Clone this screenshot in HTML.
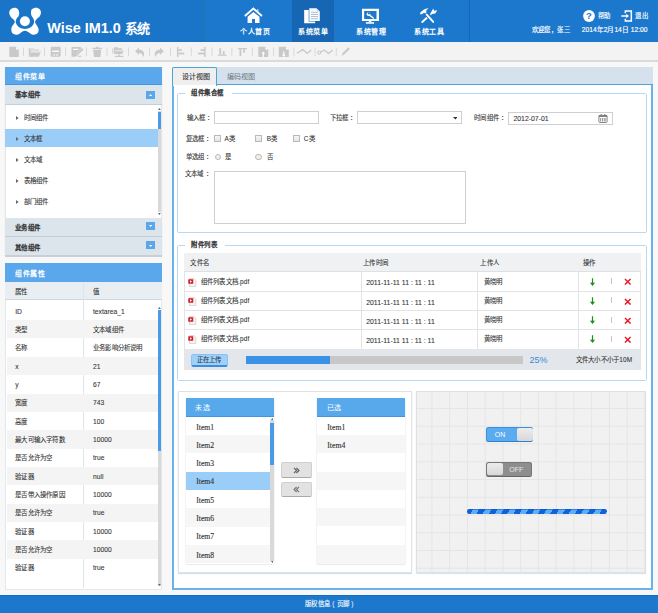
<!DOCTYPE html>
<html lang="zh-CN">
<head>
<meta charset="utf-8">
<style>
*{margin:0;padding:0;box-sizing:border-box;}
html,body{width:658px;height:613px;overflow:hidden;}
body{position:relative;background:#f8f8f9;font-family:"Liberation Sans",sans-serif;color:#333;}
.a{position:absolute;}
.t{position:absolute;white-space:nowrap;line-height:1;}
#hdr{left:0;top:0;width:658px;height:42px;background:#1a74c8;}
#tb{left:0;top:42px;width:658px;background:#f3f3f3;border-bottom:2px solid #dadada;height:19.7px;}
#ftr{left:0;top:595px;width:658px;height:18px;background:#1c78cc;border-top:1px solid #176bc2;}
.nav{top:0;width:42px;height:42px;}
.navt{top:27.6px;left:0;width:42px;text-align:center;color:#fff;font-size:7px;font-weight:bold;letter-spacing:0.5px;text-indent:0.5px;}
.sep{top:47px;width:1px;height:9px;background:#d0d0d0;}
.pan{background:#fff;}
.ph{background:#5aa8eb;height:18px;}
.pht{color:#fff;font-size:7px;font-weight:bold;letter-spacing:0.5px;}
.sub{background:#dbe5eb;border-bottom:1px solid #c5ced4;}
.subt{font-size:6.45px;color:#333;letter-spacing:0.4px;-webkit-text-stroke:0.32px #333;}
.btn8{width:8.5px;height:8px;background:#5aa8eb;}
.it{font-size:6.45px;color:#333;letter-spacing:0.2px;-webkit-text-stroke:0.08px #333;}
.lt{font-size:6.7px;letter-spacing:0;}
.tri{width:0;height:0;border-left:2.5px solid #666;border-top:2px solid transparent;border-bottom:2px solid transparent;}
.lbl{font-size:6.45px;color:#333;letter-spacing:0.2px;-webkit-text-stroke:0.08px #333;}
.inp{background:#fff;border:1px solid #cfcfcf;}
.chk{width:7px;height:7px;border:1px solid #b9b9b9;background:linear-gradient(#f6f6f6,#e4e4e4);}
.rad{width:6.5px;height:6.5px;border:1px solid #b9b9b9;border-radius:50%;background:#f0f0f0;}
.fs{border:1px solid #b9d9f3;border-radius:1.5px;}
.leg{font-size:6.45px;color:#333;background:#fff;padding:0 6px;letter-spacing:0.5px;-webkit-text-stroke:0.32px #333;}
.row{background:#fff;border-bottom:1px solid #e3e3e3;}
.srow{background:#fff;}
.srow.g{background:#f6f6f6;}
.itm{font-family:"Liberation Serif",serif;font-size:7.7px;color:#333;margin-top:0.5px;-webkit-text-stroke:0.12px #333;}
</style>
</head>
<body>
<!-- header -->
<div id="hdr" class="a"></div>
<div class="a" style="left:204px;top:0;width:454px;height:42px;background:#1c78cc;"></div>
<div class="a" style="left:203.2px;top:0;width:1.8px;height:42px;background:#2274b2;"></div>
<svg class="a" style="left:6px;top:4px" width="36" height="36" viewBox="0 0 613 613">
  <path fill="#fff" d="M140.0 65.0 C160.0 64.2 185.8 70.8 200.0 85.0 C214.2 99.2 222.5 130.0 225.0 150.0 C227.5 170.0 222.5 188.3 215.0 205.0 C207.5 221.7 188.3 235.0 180.0 250.0 C171.7 265.0 165.0 278.3 165.0 295.0 C165.0 311.7 169.2 332.5 180.0 350.0 C190.8 367.5 206.3 387.5 230.0 400.0 C253.7 412.5 291.2 425.0 322.0 425.0 C352.8 425.0 391.2 412.5 415.0 400.0 C438.8 387.5 454.2 367.5 465.0 350.0 C475.8 332.5 480.0 312.5 480.0 295.0 C480.0 277.5 472.5 260.8 465.0 245.0 C457.5 229.2 441.7 215.8 435.0 200.0 C428.3 184.2 424.2 168.3 425.0 150.0 C425.8 131.7 425.8 104.2 440.0 90.0 C454.2 75.8 487.5 65.0 510.0 65.0 C532.5 65.0 560.8 75.8 575.0 90.0 C589.2 104.2 595.0 130.0 595.0 150.0 C595.0 170.0 587.5 191.7 575.0 210.0 C562.5 228.3 533.3 243.3 520.0 260.0 C506.7 276.7 493.3 291.7 495.0 310.0 C496.7 328.3 520.0 350.0 530.0 370.0 C540.0 390.0 553.3 409.2 555.0 430.0 C556.7 450.8 553.3 479.2 540.0 495.0 C526.7 510.8 495.0 523.3 475.0 525.0 C455.0 526.7 438.3 514.2 420.0 505.0 C401.7 495.8 381.3 478.3 365.0 470.0 C348.7 461.7 336.2 455.0 322.0 455.0 C307.8 455.0 295.3 461.7 280.0 470.0 C264.7 478.3 248.3 495.8 230.0 505.0 C211.7 514.2 190.0 525.8 170.0 525.0 C150.0 524.2 123.3 515.8 110.0 500.0 C96.7 484.2 90.0 451.7 90.0 430.0 C90.0 408.3 100.0 390.0 110.0 370.0 C120.0 350.0 147.5 328.3 150.0 310.0 C152.5 291.7 136.7 275.8 125.0 260.0 C113.3 244.2 91.7 233.3 80.0 215.0 C68.3 196.7 55.0 170.8 55.0 150.0 C55.0 129.2 65.8 104.2 80.0 90.0 C94.2 75.8 120.0 65.8 140.0 65.0Z"/>
  <circle cx="322" cy="295" r="85" fill="#fff"/>
</svg>
<div class="t" style="left:47.2px;top:20.8px;font-size:14.4px;font-weight:bold;color:#fff;">Wise IM1.0 <span style="font-size:13px;position:relative;top:0.3px;letter-spacing:-0.2px;">系统</span></div>

<div class="a nav" style="left:234px;"></div>
<div class="a nav" style="left:292px;background:#1766b3;"></div>
<div class="a nav" style="left:350px;"></div>
<div class="a nav" style="left:408px;"></div>
<div class="t navt" style="left:234px;">个人首页</div>
<div class="t navt" style="left:292px;">系统菜单</div>
<div class="t navt" style="left:350px;">系统管理</div>
<div class="t navt" style="left:408px;">系统工具</div>
<div class="a" style="left:469px;top:0;width:1px;height:42px;background:#1a66b0;"></div>


<svg class="a" style="left:240px;top:4px" width="28" height="22" viewBox="0 0 658 517">
  <polyline points="128,272 315,108 502,272" fill="none" stroke="#fff" stroke-width="44" stroke-linecap="round" stroke-linejoin="miter"/>
  <rect x="402" y="125" width="32" height="60" fill="#cfe3f5"/>
  <path fill="#fff" d="M178 448 L178 300 L317 190 L458 300 L458 448 L352 448 L352 352 L283 352 L283 448Z"/>
</svg>
<svg class="a" style="left:298px;top:4px" width="28" height="22" viewBox="0 0 658 517">
  <rect x="145" y="140" width="258" height="312" fill="#fff"/>
  <path d="M252 88 L435 88 L522 170 L522 412 L252 412Z" fill="#1766b3"/>
  <path d="M266 98 L430 98 L512 176 L512 400 L266 400Z" fill="#fff"/>
  <path d="M430 98 L430 176 L512 176Z" fill="#d4e3f1"/>
  <g stroke="#7f9fbf" stroke-width="16"><line x1="305" y1="196" x2="472" y2="196"/><line x1="305" y1="246" x2="472" y2="246"/><line x1="305" y1="296" x2="472" y2="296"/><line x1="305" y1="346" x2="472" y2="346"/></g>
  <line x1="305" y1="140" x2="400" y2="140" stroke="#c9d9e8" stroke-width="12"/>
</svg>
<svg class="a" style="left:356px;top:4px" width="28" height="22" viewBox="0 0 658 517">
  <path fill="#fff" fill-rule="evenodd" d="M140 110 H540 V402 H140Z M192 166 V352 H482 V166Z"/>
  <rect x="302" y="400" width="56" height="30" fill="#fff"/>
  <rect x="232" y="425" width="192" height="40" fill="#fff" opacity="0.92"/>
  <line x1="300" y1="250" x2="405" y2="330" stroke="#fff" stroke-width="34" stroke-linecap="round"/>
  <circle cx="292" cy="238" r="42" fill="#fff"/>
  <path d="M300 186 L330 226 L300 250 L270 206Z" fill="#1b75c9"/>
</svg>
<svg class="a" style="left:417px;top:6px" width="23" height="19" viewBox="0 0 658 544">
  <path d="M150 455 L300 325" stroke="#fff" stroke-width="58" stroke-linecap="round"/>
  <path d="M270 245 L470 455" stroke="#1c78cc" stroke-width="100"/>
  <path d="M278 248 L465 455" stroke="#fff" stroke-width="56" stroke-linecap="round"/>
  <path fill="#fff" d="M85 200 C110 170 150 125 230 85 C270 68 310 60 335 62 C295 90 262 120 262 150 L272 178 L238 218 L198 196 C180 210 150 235 118 245 C95 240 85 225 85 200Z"/>
  <path fill="#fff" d="M372 250 C378 215 395 180 420 150 C432 120 445 92 478 68 C472 95 475 118 492 135 C515 140 535 128 560 108 C570 150 555 190 515 212 C480 222 445 218 420 235 L395 262Z"/>
</svg>
<!-- header right -->
<svg class="a" style="left:583px;top:10.4px" width="12" height="12" viewBox="0 0 12 12">
  <circle cx="6" cy="6" r="5.9" fill="#fff"/>
  <text x="6" y="9.4" text-anchor="middle" font-family="Liberation Sans" font-weight="bold" font-size="9.5" fill="#1b75c9">?</text>
</svg>
<div class="t" style="left:598px;top:13.3px;font-size:6.4px;color:#fff;letter-spacing:0.3px;-webkit-text-stroke:0.15px #fff;">帮助</div>
<svg class="a" style="left:621px;top:10px" width="12" height="12" viewBox="0 0 72 72">
  <path d="M26 20 V6 H62 V66 H26 V52" fill="none" stroke="#fff" stroke-width="9"/>
  <line x1="2" y1="36" x2="36" y2="36" stroke="#fff" stroke-width="9"/>
  <path d="M32 22 L48 36 L32 50Z" fill="#fff"/>
</svg>
<div class="t" style="left:635.3px;top:13.3px;font-size:6.4px;color:#fff;letter-spacing:0.3px;-webkit-text-stroke:0.15px #fff;">退出</div>
<div class="t" style="left:531.5px;top:27.4px;font-size:6.4px;color:#fff;letter-spacing:0.45px;-webkit-text-stroke:0.15px #fff;">欢迎您，张三</div>
<div class="t" style="left:581.8px;top:27.4px;font-size:6.7px;color:#fff;-webkit-text-stroke:0.15px #fff;">2014年2月14日 12:00</div>

<!-- toolbar -->
<div id="tb" class="a"></div>


<!-- toolbar icons -->
<svg class="a" style="left:0;top:42px" width="360" height="18" viewBox="0 42 360 18">
 <g fill="#c9c9c9">
  <path d="M9.3 46.8 H16.3 L18.8 49.3 V56.6 Q18.8 57 18.4 57 H9.7 Q9.3 57 9.3 56.6Z"/>
  <path d="M16.1 46.8 L18.8 49.5 H16.1Z" fill="#fff"/>
  <path d="M28.8 48 H33 L34.3 49.3 H38.8 V51 H31 L28.8 56.8Z"/>
  <path d="M28.8 56.8 L31.2 51.2 H41.1 L38.8 56.8Z"/>
  <path d="M31.2 51.2 H41.1 L40.6 52.4 H30.7Z" fill="#e9edf2"/>
  <path d="M29 48 H33 L34.1 49.2 H38.7 V51 H31" fill="#f4f6f9" opacity="0.5"/>
  <rect x="50.7" y="46.8" width="10" height="10" rx="1.3"/>
  <rect x="52.3" y="50.6" width="6.8" height="1.4" fill="#fff"/>
  <rect x="53.4" y="54.3" width="1.6" height="1.2" fill="#fff"/>
  <rect x="56.4" y="54.3" width="1.6" height="1.2" fill="#fff"/>
  <path d="M71.5 47 H81 V49 L76.5 53.6 L75.8 56.8 H71.5Z"/>
  <rect x="73" y="48.8" width="5.4" height="1.1" fill="#fff"/>
  <path d="M77.5 55.5 L83.5 49.4 L82.2 48.1 L76.2 54.2 L75.9 56Z"/>
  <path d="M78 55.8 H81.5 V56.8 H77Z"/>
  <rect x="92.4" y="47.8" width="9.6" height="1.3"/>
  <rect x="95.8" y="46.8" width="2.8" height="1.2"/>
  <path d="M93.2 49.7 H101.2 L100.4 57 H94Z"/>
  <path d="M114 47.3 H117.5 L118.5 48.3 H122 V50 H115.5 L114 54Z"/>
  <path d="M114 54 L115.8 50.2 H123.9 L122.2 54Z"/>
  <path d="M115.8 50.2 H123.9 L123.5 51.2 H115.3Z" fill="#e6ecf3"/>
  <rect x="112" y="48.5" width="1.5" height="5" opacity="0.6"/>
  <rect x="118.4" y="54" width="1.2" height="2"/>
  <rect x="114.8" y="55.8" width="8.6" height="1.2"/>
  <path d="M135.1 51.2 L139 47.6 V49.8 Q144.2 49.9 144.2 54.6 Q144 56.4 143 57 Q142.8 52.9 139 52.9 V54.9Z"/>
  <path d="M163.8 51.2 L159.9 47.6 V49.8 Q154.7 49.9 154.7 54.6 Q154.9 56.4 155.9 57 Q156.1 52.9 159.9 52.9 V54.9Z"/>
  <rect x="176.9" y="47" width="1.5" height="10"/>
  <rect x="178.4" y="49.2" width="3.4" height="1.8"/>
  <rect x="178.4" y="52.6" width="5.9" height="1.8"/>
  <rect x="204.1" y="47" width="1.5" height="10"/>
  <rect x="200.7" y="49.2" width="3.4" height="1.8"/>
  <rect x="197.9" y="52.6" width="6.2" height="1.8"/>
  <rect x="217.9" y="54.6" width="8.7" height="1.2"/>
  <rect x="219.3" y="48.2" width="1.8" height="6.4"/>
  <rect x="222.8" y="51.2" width="1.8" height="3.4"/>
  <rect x="238" y="48" width="9" height="1.2"/>
  <rect x="239.5" y="49.2" width="1.8" height="6.8"/>
  <rect x="243.2" y="49.2" width="1.8" height="3.4"/>
  <path d="M258.3 46.8 H265.5 L268.3 49.6 V56.6 Q268.3 57 267.9 57 H258.7 Q258.3 57 258.3 56.6Z"/>
  <path d="M265.5 46.8 L268.3 49.6 H265.5Z" fill="#fff"/>
  <path d="M263.3 51.5 L265.2 53.7 H263.9 V57 H262.7 V53.7 H261.4Z" fill="#fff"/>
  <path d="M278.8 46.8 H286 L288.8 49.6 V56.6 Q288.8 57 288.4 57 H279.2 Q278.8 57 278.8 56.6Z"/>
  <path d="M286 46.8 L288.8 49.6 H286Z" fill="#fff"/>
  <path d="M283.8 57 L285.7 54.8 H284.4 V51.5 H283.2 V54.8 H281.9Z" fill="#fff"/>
  <path d="M341.8 55.7 L342.6 53 L348.4 47.2 L350 48.8 L344.2 54.6Z"/>
 </g>
 <g fill="none" stroke="#c9c9c9" stroke-width="1.3" stroke-linejoin="round">
  <polyline points="297,53.3 302.8,49.6 307.2,53.5 311.2,50"/>
  <polyline points="321.3,52 324.2,50 328.4,53.5 332.8,50"/>
  <circle cx="319.3" cy="52.6" r="1.6" stroke-width="1.1"/>
 </g>
 <g fill="#d6d6d6">
  <rect x="23" y="47.5" width="0.9" height="8.5"/><rect x="44" y="47.5" width="0.9" height="8.5"/><rect x="65" y="47.5" width="0.9" height="8.5"/>
  <rect x="86" y="47.5" width="0.9" height="8.5"/><rect x="106.6" y="47.5" width="0.9" height="8.5"/><rect x="128" y="47.5" width="0.9" height="8.5"/>
  <rect x="149" y="47.5" width="0.9" height="8.5"/><rect x="170" y="47.5" width="0.9" height="8.5"/><rect x="190.8" y="47.5" width="0.9" height="8.5"/>
  <rect x="211.5" y="47.5" width="0.9" height="8.5"/><rect x="231.4" y="47.5" width="0.9" height="8.5"/><rect x="251.8" y="47.5" width="0.9" height="8.5"/>
  <rect x="273" y="47.5" width="0.9" height="8.5"/><rect x="293.5" y="47.5" width="0.9" height="8.5"/><rect x="314.6" y="47.5" width="0.9" height="8.5"/>
  <rect x="335.8" y="47.5" width="0.9" height="8.5"/>
 </g>
</svg>


<!-- sidebar panel 1 -->
<div class="a" style="left:5.1px;top:67px;width:156.9px;height:188px;background:#fff;border-left:1px solid #e6e6e6;border-right:1px solid #e6e6e6;box-shadow:0 1px 1px rgba(0,0,0,0.12);"></div>
<div class="a ph" style="left:5.1px;top:67px;width:156.9px;height:18px;border-bottom:1px solid #4596dc;"></div>
<div class="t pht" style="left:15.2px;top:73.2px;">组件菜单</div>
<div class="a sub" style="left:5.1px;top:85px;width:156.9px;height:19.6px;"></div>
<div class="t subt" style="left:15px;top:91.5px;">基本组件</div>
<div class="a btn8" style="left:146.2px;top:91px;"></div>
<svg class="a" style="left:148.9px;top:93.9px" width="3.2" height="2" viewBox="0 0 3.2 2"><path d="M0 2 L1.6 0 L3.2 2Z" fill="#fff"/></svg>
<div class="a" style="left:5.1px;top:128.7px;width:152.7px;height:18px;background:#9acdf8;"></div>
<svg class="a" style="left:16.2px;top:116.3px" width="2.6" height="4" viewBox="0 0 2.6 4"><path d="M0 0 L2.6 2 L0 4Z" fill="#666"/></svg>
<div class="t it" style="left:23.5px;top:114.8px;">时间组件</div>
<svg class="a" style="left:16.2px;top:137.3px" width="2.6" height="4" viewBox="0 0 2.6 4"><path d="M0 0 L2.6 2 L0 4Z" fill="#666"/></svg>
<div class="t it" style="left:23.5px;top:136px;">文本框</div>
<svg class="a" style="left:16.2px;top:158.3px" width="2.6" height="4" viewBox="0 0 2.6 4"><path d="M0 0 L2.6 2 L0 4Z" fill="#666"/></svg>
<div class="t it" style="left:23.5px;top:157px;">文本域</div>
<svg class="a" style="left:16.2px;top:179.3px" width="2.6" height="4" viewBox="0 0 2.6 4"><path d="M0 0 L2.6 2 L0 4Z" fill="#666"/></svg>
<div class="t it" style="left:23.5px;top:178px;">表格组件</div>
<svg class="a" style="left:16.2px;top:200.3px" width="2.6" height="4" viewBox="0 0 2.6 4"><path d="M0 0 L2.6 2 L0 4Z" fill="#666"/></svg>
<div class="t it" style="left:23.5px;top:199px;">部门组件</div>
<!-- scrollbar1 -->
<div class="a" style="left:157.8px;top:111px;width:3.5px;height:100.5px;background:#d9d9d9;"></div>
<div class="a" style="left:157.8px;top:111.5px;width:3.5px;height:17.5px;background:#4a9be6;"></div>
<svg class="a" style="left:158.1px;top:107.7px" width="2.8" height="2" viewBox="0 0 2.8 2"><path d="M0 2 L1.4 0 L2.8 2Z" fill="#666"/></svg>
<svg class="a" style="left:158.1px;top:213px" width="2.8" height="2" viewBox="0 0 2.8 2"><path d="M0 0 L1.4 2 L2.8 0Z" fill="#666"/></svg>
<div class="a sub" style="left:5.1px;top:218px;width:156.9px;height:18.7px;"></div>
<div class="t subt" style="left:15px;top:225px;">业务组件</div>
<div class="a btn8" style="left:146.2px;top:222px;"></div>
<svg class="a" style="left:148.9px;top:225.4px" width="3.2" height="2" viewBox="0 0 3.2 2"><path d="M0 0 L1.6 2 L3.2 0Z" fill="#fff"/></svg>
<div class="a sub" style="left:5.1px;top:236.7px;width:156.9px;height:20.3px;border-bottom:2px solid #c9cfd4;"></div>
<div class="t subt" style="left:15px;top:245px;">其他组件</div>
<div class="a btn8" style="left:146.2px;top:241px;"></div>
<svg class="a" style="left:148.9px;top:245.2px" width="3.2" height="2" viewBox="0 0 3.2 2"><path d="M0 0 L1.6 2 L3.2 0Z" fill="#fff"/></svg>

<!-- sidebar panel 2 -->
<div class="a" style="left:5.1px;top:263.4px;width:156.9px;height:326.3px;background:#fff;border:1px solid #e3e8ec;border-top:none;"></div>
<div class="a ph" style="left:5.1px;top:263.4px;width:156.9px;height:18.3px;"></div>
<div class="t pht" style="left:15px;top:269.5px;">组件属性</div>
<div class="a" style="left:5.1px;top:281.7px;width:156.9px;height:18.3px;background:#e8eef2;border-bottom:1px solid #cfd8de;"></div>
<div class="t it" style="left:15.2px;top:288.6px;">属性</div>
<div class="t it" style="left:92.6px;top:288.6px;">值</div>
<div class="a" style="left:82.7px;top:281.7px;width:1px;height:306.5px;background:#e1e5e8;"></div>
<div class="a" style="left:6.5px;top:320.14px;width:151px;height:18.34px;background:#f4f4f4;"></div>
<div class="a" style="left:6.5px;top:356.82px;width:151px;height:18.34px;background:#f4f4f4;"></div>
<div class="a" style="left:6.5px;top:393.50px;width:151px;height:18.34px;background:#f4f4f4;"></div>
<div class="a" style="left:6.5px;top:430.18px;width:151px;height:18.34px;background:#f4f4f4;"></div>
<div class="a" style="left:6.5px;top:466.86px;width:151px;height:18.34px;background:#f4f4f4;"></div>
<div class="a" style="left:6.5px;top:503.54px;width:151px;height:18.34px;background:#f4f4f4;"></div>
<div class="a" style="left:6.5px;top:540.22px;width:151px;height:18.34px;background:#f4f4f4;"></div>
<div class="t it lt" style="left:15.2px;top:308.60px;">ID</div><div class="t it lt" style="left:93px;top:308.60px;">textarea_1</div>
<div class="t it" style="left:15.2px;top:326.94px;">类型</div><div class="t it" style="left:93px;top:326.94px;">文本域组件</div>
<div class="t it" style="left:15.2px;top:345.28px;">名称</div><div class="t it" style="left:93px;top:345.28px;">业务影响分析说明</div>
<div class="t it lt" style="left:15.2px;top:363.62px;">x</div><div class="t it lt" style="left:93px;top:363.62px;">21</div>
<div class="t it lt" style="left:15.2px;top:381.96px;">y</div><div class="t it lt" style="left:93px;top:381.96px;">67</div>
<div class="t it" style="left:15.2px;top:400.30px;">宽度</div><div class="t it lt" style="left:93px;top:400.30px;">743</div>
<div class="t it" style="left:15.2px;top:418.64px;">高度</div><div class="t it lt" style="left:93px;top:418.64px;">100</div>
<div class="t it" style="left:15.2px;top:436.98px;">最大可输入字符数</div><div class="t it lt" style="left:93px;top:436.98px;">10000</div>
<div class="t it" style="left:15.2px;top:455.32px;">是否允许为空</div><div class="t it lt" style="left:93px;top:455.32px;">true</div>
<div class="t it" style="left:15.2px;top:473.66px;">验证器</div><div class="t it lt" style="left:93px;top:473.66px;">null</div>
<div class="t it" style="left:15.2px;top:492.00px;">是否带入操作原因</div><div class="t it lt" style="left:93px;top:492.00px;">10000</div>
<div class="t it" style="left:15.2px;top:510.34px;">是否允许为空</div><div class="t it lt" style="left:93px;top:510.34px;">true</div>
<div class="t it" style="left:15.2px;top:528.68px;">验证器</div><div class="t it lt" style="left:93px;top:528.68px;">10000</div>
<div class="t it" style="left:15.2px;top:547.02px;">是否允许为空</div><div class="t it lt" style="left:93px;top:547.02px;">10000</div>
<div class="t it" style="left:15.2px;top:565.36px;">验证器</div><div class="t it lt" style="left:93px;top:565.36px;">true</div>
<div class="a" style="left:157.6px;top:309.5px;width:3.6px;height:276px;background:#d9d9d9;"></div>
<div class="a" style="left:157.6px;top:310.3px;width:3.6px;height:141.2px;background:#4a9be6;"></div>
<svg class="a" style="left:158px;top:307px" width="2.8" height="2" viewBox="0 0 2.8 2"><path d="M0 2 L1.4 0 L2.8 2Z" fill="#666"/></svg>
<svg class="a" style="left:158px;top:584px" width="2.8" height="2" viewBox="0 0 2.8 2"><path d="M0 0 L1.4 2 L2.8 0Z" fill="#666"/></svg>
<!-- main content -->
<div class="a" style="left:172px;top:67px;width:480.5px;height:522.5px;background:#fff;border:2px solid #68b2ee;border-top:none;"></div>
<div class="a" style="left:172px;top:67px;width:480.5px;height:17.6px;background:#d5e1ec;border-bottom:1.5px solid #4ea3dc;"></div>
<div class="a" style="left:172px;top:67px;width:45.3px;height:19px;background:linear-gradient(#efefef 0,#efefef 16.6px,#fff 16.6px);border:1.9px solid #4aa5d8;border-bottom:none;border-radius:2px 2px 0 0;"></div>
<div class="t" style="left:181.6px;top:72.6px;font-size:7px;color:#333;letter-spacing:0.1px;-webkit-text-stroke:0.1px #333;">设计视图</div>
<div class="t" style="left:226.8px;top:72.6px;font-size:7px;color:#6c757e;letter-spacing:0.1px;">编码视图</div>

<!-- fieldset 1 -->
<div class="a fs" style="left:177.3px;top:93.2px;width:470px;height:140px;"></div>
<div class="t leg" style="left:185.3px;top:90.4px;padding-right:8px;">组件集合框</div>
<div class="t lbl" style="left:186.5px;top:114.5px;">输入框 ：</div>
<div class="a inp" style="left:213.8px;top:111.2px;width:105px;height:13.2px;"></div>
<div class="t lbl" style="left:329.6px;top:114.5px;">下拉框 ：</div>
<div class="a inp" style="left:357.2px;top:110.9px;width:105px;height:13.4px;"></div>
<svg class="a" style="left:452.6px;top:117px" width="4.8" height="2.6" viewBox="0 0 4.8 2.6"><path d="M0 0 L2.4 2.6 L4.8 0Z" fill="#333"/></svg>
<div class="t lbl" style="left:474.2px;top:115px;">时间组件 ：</div>
<div class="a inp" style="left:508.3px;top:111.6px;width:104.5px;height:13.9px;"></div>
<div class="t" style="left:513.4px;top:115.6px;font-size:6.9px;color:#333;-webkit-text-stroke:0.08px #333;">2012-07-01</div>
<svg class="a" style="left:598px;top:114.2px" width="10" height="9" viewBox="0 0 10 9">
 <rect x="0.9" y="1.3" width="8.2" height="7.2" rx="1" fill="none" stroke="#777" stroke-width="0.9"/>
 <rect x="0.9" y="1.3" width="8.2" height="1.6" fill="#777"/>
 <rect x="2.7" y="0.2" width="0.9" height="1.8" fill="#777"/><rect x="6.4" y="0.2" width="0.9" height="1.8" fill="#777"/>
 <g fill="#888"><rect x="2.2" y="4" width="0.9" height="3.5"/><rect x="4" y="4" width="0.9" height="3.5"/><rect x="5.8" y="4" width="0.9" height="3.5"/><rect x="7.3" y="4" width="0.6" height="3.5"/></g>
</svg>
<div class="t lbl" style="left:185.5px;top:136px;">复选框 ：</div>
<div class="a chk" style="left:214.4px;top:135.2px;"></div>
<div class="t lbl" style="left:224.6px;top:136.1px;">A类</div>
<div class="a chk" style="left:255.2px;top:135.2px;"></div>
<div class="t lbl" style="left:266.7px;top:136.1px;">B类</div>
<div class="a chk" style="left:293px;top:135.2px;"></div>
<div class="t lbl" style="left:303.7px;top:136.1px;">C类</div>
<div class="t lbl" style="left:185.5px;top:153.8px;">单选组 ：</div>
<div class="a rad" style="left:214.8px;top:153.6px;"></div>
<div class="t lbl" style="left:225.2px;top:153.8px;">是</div>
<div class="a rad" style="left:255px;top:153.6px;"></div>
<div class="t lbl" style="left:267.4px;top:153.8px;">否</div>
<div class="t lbl" style="left:185px;top:171px;">文本域 ：</div>
<div class="a inp" style="left:214.3px;top:170.7px;width:251.3px;height:53.8px;"></div>

<!-- fieldset 2 -->
<div class="a fs" style="left:177.3px;top:245px;width:470px;height:136.3px;"></div>
<div class="t leg" style="left:185.3px;top:242px;padding-right:8px;">附件列表</div>
<div class="a" style="left:183.5px;top:253.2px;width:457.5px;height:116.5px;background:#fff;border:1px solid #e2e5e8;"></div>
<div class="a" style="left:183.5px;top:253.2px;width:457.5px;height:18.8px;background:#eff1f3;border-bottom:1px solid #dde1e5;"></div>
<div class="t it" style="left:190.4px;top:260px;">文件名</div>
<div class="t it" style="left:363.2px;top:260px;">上传时间</div>
<div class="t it" style="left:480.4px;top:260px;">上传人</div>
<div class="t it" style="left:582.7px;top:260px;">操作</div>
<div class="a" style="left:184.5px;top:290.7px;width:455.5px;height:1px;background:#e3e3e3;"></div>
<div class="a" style="left:360.5px;top:272.0px;width:1px;height:19.2px;background:#e3e3e3;"></div>
<div class="a" style="left:477.4px;top:272.0px;width:1px;height:19.2px;background:#e3e3e3;"></div>
<div class="a" style="left:578px;top:272.0px;width:1px;height:19.2px;background:#e3e3e3;"></div>
<svg class="a" style="left:188.3px;top:277.5px" width="8.5" height="9" viewBox="0 0 17 18"><path d="M3 1 H12 L15.5 4.5 V17 H3Z" fill="#f4f4f4" stroke="#bbb" stroke-width="1"/><rect x="0.5" y="2.5" width="10" height="9" rx="1" fill="#d4202a"/><path d="M4 4.5 L8 7 L4 9.5Z" fill="#fff"/></svg>
<div class="t it" style="left:200.8px;top:278.6px;">组件列表文档.pdf</div>
<div class="t it lt" style="left:366.2px;top:280.4px;font-size:6.9px;">2011-11-11 11 : 11 : 11</div>
<div class="t it" style="left:483.7px;top:278.6px;">黄晓明</div>
<svg class="a" style="left:589.8px;top:277.8px" width="5" height="8" viewBox="0 0 5 8"><path d="M2.5 0.3 V6.5 M0.6 4.6 L2.5 7 L4.4 4.6" fill="none" stroke="#1f8c1f" stroke-width="1.2"/></svg>
<div class="a" style="left:610.8px;top:278.2px;width:0.8px;height:6px;background:#c4c4c4;"></div>
<svg class="a" style="left:624.2px;top:278.3px" width="7.5" height="7.5" viewBox="0 0 8 8"><path d="M1 1 L7 7 M7 1 L1 7" stroke="#e8161e" stroke-width="1.5"/></svg>
<div class="a" style="left:184.5px;top:309.9px;width:455.5px;height:1px;background:#e3e3e3;"></div>
<div class="a" style="left:360.5px;top:291.2px;width:1px;height:19.2px;background:#e3e3e3;"></div>
<div class="a" style="left:477.4px;top:291.2px;width:1px;height:19.2px;background:#e3e3e3;"></div>
<div class="a" style="left:578px;top:291.2px;width:1px;height:19.2px;background:#e3e3e3;"></div>
<svg class="a" style="left:188.3px;top:296.7px" width="8.5" height="9" viewBox="0 0 17 18"><path d="M3 1 H12 L15.5 4.5 V17 H3Z" fill="#f4f4f4" stroke="#bbb" stroke-width="1"/><rect x="0.5" y="2.5" width="10" height="9" rx="1" fill="#d4202a"/><path d="M4 4.5 L8 7 L4 9.5Z" fill="#fff"/></svg>
<div class="t it" style="left:200.8px;top:297.8px;">组件列表文档.pdf</div>
<div class="t it lt" style="left:366.2px;top:299.6px;font-size:6.9px;">2011-11-11 11 : 11 : 11</div>
<div class="t it" style="left:483.7px;top:297.8px;">黄晓明</div>
<svg class="a" style="left:589.8px;top:297.0px" width="5" height="8" viewBox="0 0 5 8"><path d="M2.5 0.3 V6.5 M0.6 4.6 L2.5 7 L4.4 4.6" fill="none" stroke="#1f8c1f" stroke-width="1.2"/></svg>
<div class="a" style="left:610.8px;top:297.4px;width:0.8px;height:6px;background:#c4c4c4;"></div>
<svg class="a" style="left:624.2px;top:297.5px" width="7.5" height="7.5" viewBox="0 0 8 8"><path d="M1 1 L7 7 M7 1 L1 7" stroke="#e8161e" stroke-width="1.5"/></svg>
<div class="a" style="left:184.5px;top:329.1px;width:455.5px;height:1px;background:#e3e3e3;"></div>
<div class="a" style="left:360.5px;top:310.4px;width:1px;height:19.2px;background:#e3e3e3;"></div>
<div class="a" style="left:477.4px;top:310.4px;width:1px;height:19.2px;background:#e3e3e3;"></div>
<div class="a" style="left:578px;top:310.4px;width:1px;height:19.2px;background:#e3e3e3;"></div>
<svg class="a" style="left:188.3px;top:315.9px" width="8.5" height="9" viewBox="0 0 17 18"><path d="M3 1 H12 L15.5 4.5 V17 H3Z" fill="#f4f4f4" stroke="#bbb" stroke-width="1"/><rect x="0.5" y="2.5" width="10" height="9" rx="1" fill="#d4202a"/><path d="M4 4.5 L8 7 L4 9.5Z" fill="#fff"/></svg>
<div class="t it" style="left:200.8px;top:317.0px;">组件列表文档.pdf</div>
<div class="t it lt" style="left:366.2px;top:318.8px;font-size:6.9px;">2011-11-11 11 : 11 : 11</div>
<div class="t it" style="left:483.7px;top:317.0px;">黄晓明</div>
<svg class="a" style="left:589.8px;top:316.2px" width="5" height="8" viewBox="0 0 5 8"><path d="M2.5 0.3 V6.5 M0.6 4.6 L2.5 7 L4.4 4.6" fill="none" stroke="#1f8c1f" stroke-width="1.2"/></svg>
<div class="a" style="left:610.8px;top:316.6px;width:0.8px;height:6px;background:#c4c4c4;"></div>
<svg class="a" style="left:624.2px;top:316.7px" width="7.5" height="7.5" viewBox="0 0 8 8"><path d="M1 1 L7 7 M7 1 L1 7" stroke="#e8161e" stroke-width="1.5"/></svg>
<div class="a" style="left:360.5px;top:329.6px;width:1px;height:19.2px;background:#e3e3e3;"></div>
<div class="a" style="left:477.4px;top:329.6px;width:1px;height:19.2px;background:#e3e3e3;"></div>
<div class="a" style="left:578px;top:329.6px;width:1px;height:19.2px;background:#e3e3e3;"></div>
<svg class="a" style="left:188.3px;top:335.1px" width="8.5" height="9" viewBox="0 0 17 18"><path d="M3 1 H12 L15.5 4.5 V17 H3Z" fill="#f4f4f4" stroke="#bbb" stroke-width="1"/><rect x="0.5" y="2.5" width="10" height="9" rx="1" fill="#d4202a"/><path d="M4 4.5 L8 7 L4 9.5Z" fill="#fff"/></svg>
<div class="t it" style="left:200.8px;top:336.2px;">组件列表文档.pdf</div>
<div class="t it lt" style="left:366.2px;top:338.0px;font-size:6.9px;">2011-11-11 11 : 11 : 11</div>
<div class="t it" style="left:483.7px;top:336.2px;">黄晓明</div>
<svg class="a" style="left:589.8px;top:335.4px" width="5" height="8" viewBox="0 0 5 8"><path d="M2.5 0.3 V6.5 M0.6 4.6 L2.5 7 L4.4 4.6" fill="none" stroke="#1f8c1f" stroke-width="1.2"/></svg>
<div class="a" style="left:610.8px;top:335.8px;width:0.8px;height:6px;background:#c4c4c4;"></div>
<svg class="a" style="left:624.2px;top:335.9px" width="7.5" height="7.5" viewBox="0 0 8 8"><path d="M1 1 L7 7 M7 1 L1 7" stroke="#e8161e" stroke-width="1.5"/></svg>

<div class="a" style="left:183.5px;top:348.5px;width:457.5px;height:21.2px;background:#e3e6ea;"></div>
<div class="a" style="left:191.1px;top:353.8px;width:36.5px;height:12.9px;background:#9fd0fa;border:1px solid #86c2f2;border-bottom:2px solid #3a8fdc;border-radius:2.5px;"></div>
<div class="t" style="left:197.2px;top:356.8px;font-size:6.45px;color:#2a3a4a;letter-spacing:0.1px;-webkit-text-stroke:0.08px #2a3a4a;">正在上传</div>
<div class="a" style="left:245.8px;top:356.4px;width:277.4px;height:7.3px;background:#c8c8c8;"></div>
<div class="a" style="left:245.8px;top:356.4px;width:84.1px;height:7.3px;background:#3a92e6;"></div>
<div class="t" style="left:529.5px;top:355.6px;font-size:9px;color:#3a8ad8;">25%</div>
<div class="t it" style="left:575.9px;top:356.8px;">文件大小不小于10M</div>

<!-- bottom left panel -->
<div class="a" style="left:178.2px;top:391.4px;width:233.5px;height:181.2px;background:#fff;border:1px solid #e1e1e1;box-shadow:0 1px 1px #cfe0ee;"></div>
<div class="a" style="left:185.5px;top:398.2px;width:88.3px;height:166px;background:#fff;box-shadow:0 0.5px 1.5px rgba(0,0,0,0.2);"></div>
<div class="a" style="left:185.5px;top:398.2px;width:88.3px;height:18.6px;background:#58a8ec;border-bottom:1px solid #3f95e2;"></div>
<div class="t pht" style="left:195.2px;top:404px;font-weight:normal;">未选</div>
<div class="a" style="left:185.5px;top:416.80px;width:84.7px;height:18.3px;background:#fff;"></div>
<div class="t itm" style="left:196.2px;top:423.00px;">Item1</div>
<div class="a" style="left:185.5px;top:435.10px;width:84.7px;height:18.3px;background:#f6f6f6;"></div>
<div class="t itm" style="left:196.2px;top:441.30px;">Item2</div>
<div class="a" style="left:185.5px;top:453.40px;width:84.7px;height:18.3px;background:#fff;"></div>
<div class="t itm" style="left:196.2px;top:459.60px;">Item3</div>
<div class="a" style="left:185.5px;top:471.70px;width:84.7px;height:18.3px;background:#9acdf8;"></div>
<div class="t itm" style="left:196.2px;top:477.90px;">Item4</div>
<div class="a" style="left:185.5px;top:490.00px;width:84.7px;height:18.3px;background:#fff;"></div>
<div class="t itm" style="left:196.2px;top:496.20px;">Item5</div>
<div class="a" style="left:185.5px;top:508.30px;width:84.7px;height:18.3px;background:#f6f6f6;"></div>
<div class="t itm" style="left:196.2px;top:514.50px;">Item6</div>
<div class="a" style="left:185.5px;top:526.60px;width:84.7px;height:18.3px;background:#fff;"></div>
<div class="t itm" style="left:196.2px;top:532.80px;">Item7</div>
<div class="a" style="left:185.5px;top:544.90px;width:84.7px;height:18.3px;background:#f6f6f6;"></div>
<div class="t itm" style="left:196.2px;top:551.10px;">Item8</div>

<div class="a" style="left:270.2px;top:420px;width:3.6px;height:141px;background:#d9d9d9;"></div>
<div class="a" style="left:270.2px;top:422.5px;width:3.6px;height:42.2px;background:#4a9be6;"></div>
<svg class="a" style="left:270.6px;top:418px" width="2.8" height="2" viewBox="0 0 2.8 2"><path d="M0 2 L1.4 0 L2.8 2Z" fill="#666"/></svg>
<svg class="a" style="left:270.6px;top:561px" width="2.8" height="2" viewBox="0 0 2.8 2"><path d="M0 0 L1.4 2 L2.8 0Z" fill="#666"/></svg>
<div class="a" style="left:280.5px;top:462.4px;width:31.2px;height:15.3px;background:#e2e2e2;border:1px solid #d0d0d0;border-bottom:1.5px solid #aaa;border-radius:2px;"></div>
<svg class="a" style="left:292.5px;top:466.5px" width="7" height="7" viewBox="0 0 7 7"><path d="M1 1 L3.6 3.5 L1 6 M3.4 1 L6 3.5 L3.4 6" fill="none" stroke="#666" stroke-width="1.2"/></svg>
<div class="a" style="left:280.5px;top:481.8px;width:31.2px;height:15.3px;background:#e2e2e2;border:1px solid #d0d0d0;border-bottom:1.5px solid #aaa;border-radius:2px;"></div>
<svg class="a" style="left:292.5px;top:486px" width="7" height="7" viewBox="0 0 7 7"><path d="M6 1 L3.4 3.5 L6 6 M3.6 1 L1 3.5 L3.6 6" fill="none" stroke="#777" stroke-width="1.1"/></svg>
<div class="a" style="left:316.8px;top:398.4px;width:88px;height:166px;background:#fff;box-shadow:0 0.5px 1.5px rgba(0,0,0,0.2);"></div>
<div class="a" style="left:316.8px;top:398.4px;width:88px;height:18.3px;background:#58a8ec;border-bottom:1px solid #3f95e2;"></div>
<div class="t pht" style="left:326.7px;top:404px;font-weight:normal;">已选</div>
<div class="a" style="left:316.8px;top:416.70px;width:88px;height:18.30px;background:#fff;"></div>
<div class="a" style="left:316.8px;top:435.00px;width:88px;height:18.30px;background:#f6f6f6;"></div>
<div class="a" style="left:316.8px;top:453.30px;width:88px;height:18.30px;background:#fff;"></div>
<div class="a" style="left:316.8px;top:471.60px;width:88px;height:18.30px;background:#f6f6f6;"></div>
<div class="a" style="left:316.8px;top:489.90px;width:88px;height:18.30px;background:#fff;"></div>
<div class="a" style="left:316.8px;top:508.20px;width:88px;height:18.30px;background:#f6f6f6;"></div>
<div class="a" style="left:316.8px;top:526.50px;width:88px;height:18.30px;background:#fff;"></div>
<div class="a" style="left:316.8px;top:544.80px;width:88px;height:19.50px;background:#f6f6f6;"></div>
<div class="t itm" style="left:327.3px;top:423px;">Item1</div>
<div class="t itm" style="left:327.3px;top:441.2px;">Item4</div>


<!-- grid panel -->
<div class="a" style="left:416.4px;top:391.4px;width:229.8px;height:181.2px;border:1px solid #e0e0e0;background-color:#f1f1f1;background-image:linear-gradient(90deg,#e5e5e5 1px,transparent 1px),linear-gradient(#e5e5e5 1px,transparent 1px);background-size:17.75px 17.75px;background-position:14.4px 16px;box-shadow:0 1px 1px #d8e4ee;"></div>
<div class="a" style="left:486.1px;top:426.9px;width:47px;height:15.4px;background:#5aabf0;border:1px solid #3d8fe0;border-bottom:1.5px solid #2f7fd0;border-radius:2.5px;"></div>
<div class="a" style="left:517px;top:427.9px;width:15.5px;height:13px;background:linear-gradient(#ececec,#d8d8d8);border-radius:2px;"></div>
<div class="t" style="left:494.8px;top:431px;font-size:7px;color:#fff;">ON</div>
<div class="a" style="left:486.1px;top:461.7px;width:46.4px;height:15.2px;background:#8e8e8e;border:1px solid #777;border-bottom:1.5px solid #666;border-radius:2.5px;"></div>
<div class="a" style="left:487.2px;top:462.7px;width:15.5px;height:12.8px;background:linear-gradient(#ececec,#d8d8d8);border-radius:2px;"></div>
<div class="t" style="left:509.3px;top:465.8px;font-size:7px;color:#e8e8e8;">OFF</div>
<div class="a" style="left:467.4px;top:509.4px;width:139.7px;height:4.5px;border-radius:2.3px;background-color:#0d63dc;background-image:repeating-linear-gradient(120deg,#0d63dc 0,#0d63dc 5.3px,#62acf2 5.3px,#62acf2 10.65px);box-shadow:inset 0 0.6px 0 #0a55c8;"></div>

<!-- footer -->
<div id="ftr" class="a"></div>
<div class="t" style="left:305px;top:601.3px;font-size:6.4px;color:#fff;letter-spacing:0.3px;-webkit-text-stroke:0.1px #fff;">版权信息</div>
<div class="t" style="left:332.2px;top:601px;font-size:6.6px;color:#fff;">(</div>
<div class="t" style="left:336.6px;top:601.3px;font-size:6.4px;color:#fff;letter-spacing:0.3px;-webkit-text-stroke:0.1px #fff;">页脚</div>
<div class="t" style="left:351.3px;top:601px;font-size:6.6px;color:#fff;">)</div>

</body>
</html>
